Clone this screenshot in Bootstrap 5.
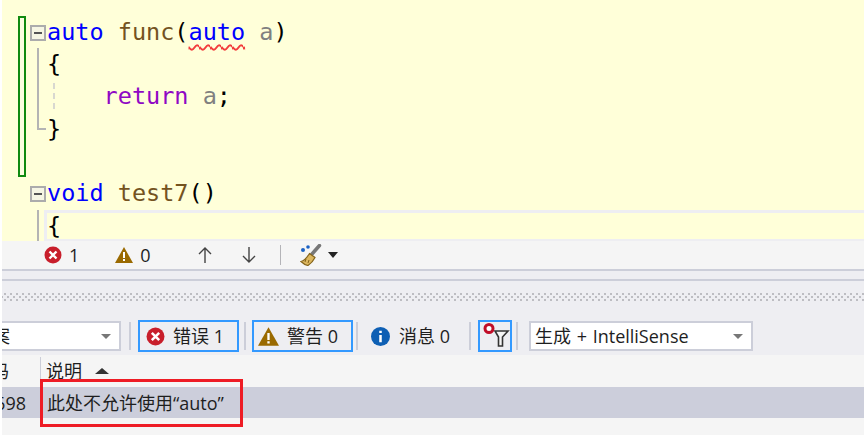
<!DOCTYPE html>
<html lang="zh"><head><meta charset="utf-8"><title>错误列表</title>
<link href="https://cdn.jsdelivr.net/npm/bootstrap@5.3.0/dist/css/bootstrap.min.css" rel="stylesheet">
<style>
html,body{margin:0;height:435px;overflow:hidden;background:#fff}
.stage{margin-left:2px;height:435px;position:relative;overflow:hidden;font-family:"Open Sans","Noto Sans CJK SC",sans-serif;font-size:18px;color:#1e1e1e}
.editor{height:241px;background:#ffffd9;padding-top:16px;overflow:hidden}
.cline{height:32.2px;display:flex;align-items:stretch;font-family:"DejaVu Sans Mono",monospace;font-size:23.5px;line-height:32px;white-space:pre;color:#000}
.chg{width:8px;margin-left:16px;border-left:2px solid #108a10;border-right:2px solid #108a10;background:#fbfde0;flex:none}
.chg-none{border-color:transparent;background:none}
.chg-top{border-top:2px solid #108a10}
.chg-bot{border-bottom:2px solid #108a10}
.fold{width:16px;margin-left:4px;margin-right:1px;flex:none;position:relative}
.fold-box{display:block;width:16px;height:16px;margin-top:9px;border:2px solid #acacac;background:#f6f6e4;position:relative}
.fold-box::after{content:"";position:absolute;left:2px;right:2px;top:5px;height:2px;background:#555}
.fold-tail{display:block;width:2px;margin-left:7px;background:#b4b4b4;height:100%}
.fold-foot{display:block;width:9px;margin-left:7px;border-left:2px solid #b4b4b4;border-bottom:2px solid #b4b4b4;height:17px}
.curline{height:31px;margin-top:1px}
.codetext{flex:1}
.curtext{margin-left:-3px;border:solid #eeeef2;border-width:3px 0 2px 3px;line-height:26px;background:#ffffd9}
.kw{color:#0000ff}.fn{color:#74531f}.pm{color:#808080}.rt{color:#8f08c4}
.squig{text-decoration:underline wavy #f23c3c 1.5px;text-underline-offset:4px;text-decoration-skip-ink:none}
.indent{position:relative}
.indent::before{content:"";position:absolute;left:6px;top:3px;bottom:4px;border-left:2px dashed #d8d8d0}
.bar1{height:28px;background:#f5f5f5;display:flex;align-items:center}
.rule{height:2px;background:#ccced9}
.gapband{height:8px;background:#eeeef2}
.bar1 .cnt{line-height:1}
.panel{height:74px;background:#eeeef2;padding-top:12px}
.grip{height:9px;background-image:radial-gradient(circle,#bdbdc2 1.1px,transparent 1.3px),radial-gradient(circle,#bdbdc2 1.1px,transparent 1.3px);background-size:6px 6px;background-position:0 -2px,3px 1px}
.tools{display:flex;align-items:center;margin-top:18px;height:32px;line-height:1}
.combo{height:30px;background:#fff;border:2px solid #ccced9;display:flex;align-items:center;flex:none}
.combo-a{width:121px;margin-left:-2px;border-left:0;justify-content:space-between;padding-right:8px}
.combo-b{width:224px;padding:0 8px 0 4px;justify-content:space-between;word-spacing:1px}
.clip-r{width:10px;overflow:hidden;display:flex;justify-content:flex-end;white-space:nowrap}
.tri{width:0;height:0;border-left:5px solid transparent;border-right:5px solid transparent;border-top:5px solid #777}
.vsep{width:2px;height:28px;background:#ccced9;flex:none}
.tog{height:32px;display:flex;align-items:center;flex:none;border:2px solid transparent;white-space:nowrap}
.tog-on{border-color:#3399ff}
.tbl-head{height:32px;background:#f5f5f5;display:flex;overflow:hidden;line-height:1}
.cell-code{width:39px;flex:none;border-right:1px solid #ccced9;margin-top:2px;position:relative;overflow:hidden}
.cell-desc{padding-left:5px;display:flex;align-items:flex-start;padding-top:7px}
.tbl-row{height:31px;background:#cccedb;display:flex;align-items:center;line-height:1}
.tbl-rest{height:17px;background:#f5f5f5}
.sorttri{width:0;height:0;border-left:7px solid transparent;border-right:7px solid transparent;border-bottom:6px solid #333;margin:6px 0 0 13px}
.callout{position:absolute;left:38px;top:379px;width:203px;height:48px;border:3px solid #ee1c25;pointer-events:none}
</style></head><body>
<div class="stage">
 <div class="editor">
  <div class="cline"><span class="chg chg-top"></span><span class="fold"><span class="fold-box"></span></span><span class="codetext"><span class="kw">auto</span> <span class="fn">func</span>(<span class="kw squig">auto</span> <span class="pm">a</span>)</span></div>
  <div class="cline"><span class="chg"></span><span class="fold"><span class="fold-tail"></span></span><span class="codetext">{</span></div>
  <div class="cline"><span class="chg"></span><span class="fold"><span class="fold-tail"></span></span><span class="codetext indent">    <span class="rt">return</span> <span class="pm">a</span>;</span></div>
  <div class="cline"><span class="chg"></span><span class="fold"><span class="fold-foot"></span></span><span class="codetext">}</span></div>
  <div class="cline"><span class="chg chg-bot"></span><span class="fold"></span><span class="codetext"></span></div>
  <div class="cline"><span class="chg chg-none"></span><span class="fold"><span class="fold-box"></span></span><span class="codetext"><span class="kw">void</span> <span class="fn">test7</span>()</span></div>
  <div class="cline curline"><span class="chg chg-none"></span><span class="fold"><span class="fold-tail"></span></span><span class="codetext curtext">{</span></div>
 </div>
 <div class="bar1">
  <svg style="margin-left:42px" width="18" height="18" viewBox="0 0 18 18"><circle cx="9" cy="9" r="8.500" fill="#c81e2b"/><path d="M5.500 5.500l7 7M12.500 5.500l-7 7" stroke="#fff" stroke-width="2.400"/></svg>
  <span class="cnt" style="margin-left:7px">1</span>
  <svg style="margin-left:36px" width="18" height="16" viewBox="0 0 18 16"><path d="M9 0L18 16H0Z" fill="#9a6a00"/><path d="M9 5v6M9 12v2" stroke="#fff" stroke-width="2"/></svg>
  <span class="cnt" style="margin-left:7px">0</span>
  <svg style="margin-left:47px" width="14" height="16" viewBox="0 0 14 16"><path d="M7 16V1M1 7l6-6 6 6" fill="none" stroke="#444" stroke-width="1.400"/></svg>
  <svg style="margin-left:30px" width="14" height="16" viewBox="0 0 14 16"><path d="M7 0v15M1 9l6 6 6-6" fill="none" stroke="#444" stroke-width="1.400"/></svg>
  <span style="width:1px;height:20px;background:#b4b4b8;margin-left:24px"></span>
  <svg style="margin-left:19px" width="22" height="22" viewBox="0 0 22 22"><path d="M19.500 1.500l-7.500 8.500" stroke="#777" stroke-width="3.500" stroke-linecap="round"/><path d="M9.500 9.500l5.500 4c-1.500 3-4 6-7 8-2.500-.5-5-2-7-4 3-.5 6-4 8.500-8z" fill="#dcb65e" stroke="#85651c" stroke-width="1.200"/><path d="M6 15l-1 3M9 16l-1 3" stroke="#85651c"/><circle cx="3" cy="6" r="2" fill="#1c62c4"/><circle cx="8" cy="3" r="1.800" fill="#1c62c4"/></svg>
  <span style="width:0;height:0;border-left:5px solid transparent;border-right:5px solid transparent;border-top:6px solid #222;margin-left:6px"></span>
 </div>
 <div class="rule"></div>
 <div class="gapband"></div>
 <div class="rule"></div>
 <div class="panel">
  <div class="grip"></div>
  <div class="tools">
   <div class="combo combo-a"><span class="clip-r"><span>整个解决方案</span></span><span class="tri"></span></div>
   <span class="vsep" style="margin-left:8px"></span>
   <div class="tog tog-on" style="width:101px;margin-left:7px;padding-left:6px">
    <svg width="19" height="19" viewBox="0 0 18 18"><circle cx="9" cy="9" r="8.500" fill="#c81e2b"/><path d="M5.500 5.500l7 7M12.500 5.500l-7 7" stroke="#fff" stroke-width="2.400"/></svg><span class="ms-2">错误 1</span></div>
   <span class="vsep" style="margin-left:5px"></span>
   <div class="tog tog-on" style="width:101px;margin-left:6px;padding-left:4px">
    <svg width="21" height="19" viewBox="0 0 18 16"><path d="M9 0L18 16H0Z" fill="#9a6a00"/><path d="M9 5v6M9 12v2" stroke="#fff" stroke-width="2"/></svg><span style="margin-left:8px">警告 0</span></div>
   <span class="vsep" style="margin-left:3px"></span>
   <div class="tog" style="width:111px;padding-left:11px">
    <svg width="19" height="19" viewBox="0 0 18 18"><circle cx="9" cy="9" r="9" fill="#0e5fb4"/><path d="M9 3.500v2.200M9 7.500v7" stroke="#fff" stroke-width="2.400"/></svg><span style="margin-left:9px">消息 0</span></div>
   <span class="vsep"></span>
   <div class="tog tog-on" style="width:34px;margin-left:7px;padding-left:0">
    <svg width="30" height="28" viewBox="0 0 30 28"><path d="M15 9h13l-5.500 6v9h-4v-9z" fill="#f5f5f5" stroke="#333" stroke-width="1.600"/><circle cx="9" cy="6.500" r="4" fill="#fff" stroke="#c00d28" stroke-width="3"/></svg></div>
   <span class="vsep" style="margin-left:4px"></span>
   <div class="combo combo-b" style="margin-left:11px"><span>生成 + IntelliSense</span><span class="tri"></span></div>
  </div>
 </div>
 <div class="tbl-head">
  <div class="cell-code"><span style="position:absolute;right:31px;top:5px">码</span></div>
  <div class="cell-desc"><span>说明</span><span class="sorttri"></span></div>
 </div>
 <div class="tbl-row">
  <span style="width:24px;overflow:hidden;white-space:nowrap;direction:rtl;text-align:right">698</span>
  <span style="margin-left:21px">此处不允许使用“auto”</span>
 </div>
 <div class="tbl-rest"></div>
 <div class="callout"></div>
</div>
<script src="https://cdn.jsdelivr.net/npm/bootstrap@5.3.0/dist/js/bootstrap.bundle.min.js"></script>
</body></html>
